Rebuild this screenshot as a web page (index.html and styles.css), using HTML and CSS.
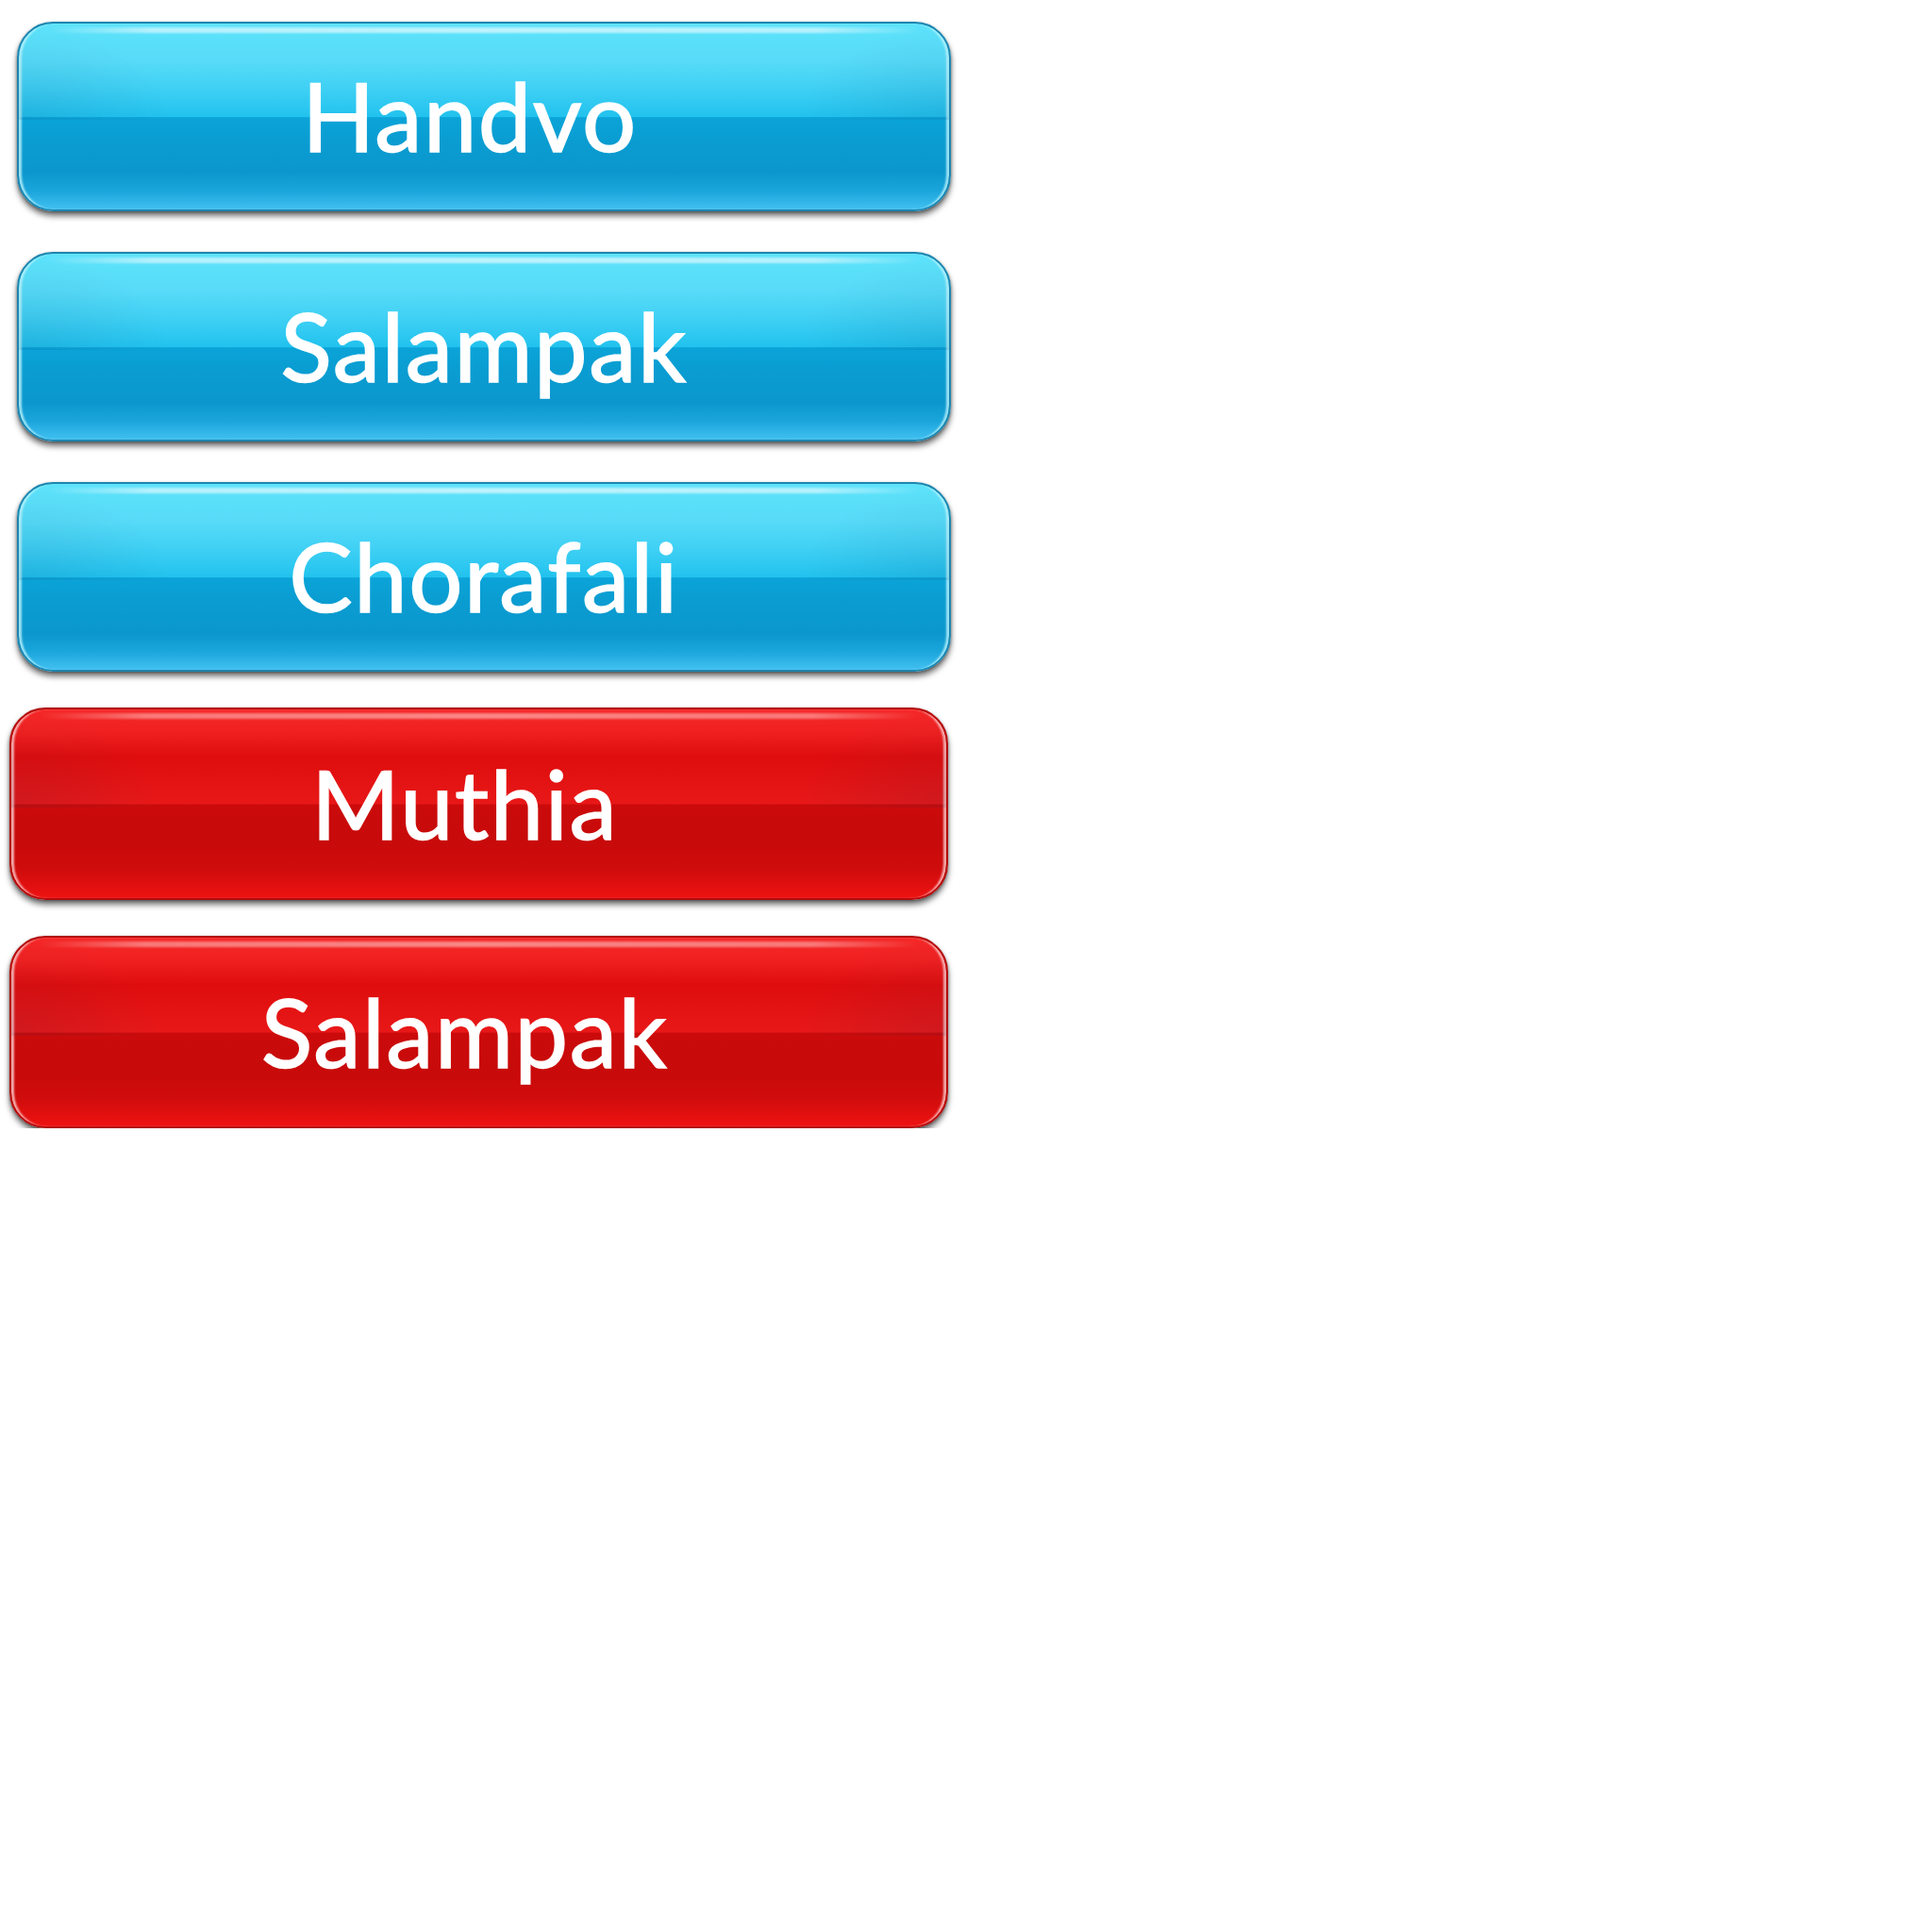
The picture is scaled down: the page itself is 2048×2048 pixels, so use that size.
FILE: index.html
```html
<!DOCTYPE html>
<html>
<head>
<meta charset="utf-8">
<title>Buttons</title>
<link rel="stylesheet" href="styles.css">
</head>
<body>
<div class="stack">
  <div class="btn btn-blue"><span class="label label-shift">Handvo</span></div>
  <div class="btn btn-blue"><span class="label">Salampak</span></div>
  <div class="btn btn-blue"><span class="label">Chorafali</span></div>
  <div class="btn btn-red"><span class="label label-shift">Muthia</span></div>
  <div class="btn btn-red"><span class="label label-shift">Salampak</span></div>
</div>
</body>
</html>
```

FILE: styles.css
```css
html, body {
  margin: 0;
  padding: 0;
  background: #ffffff;
}

.stack {
  display: flex;
  flex-direction: column;
  align-items: flex-start;
  gap: 40px;
  padding-top: 23px;
}

.btn {
  position: relative;
  box-sizing: border-box;
  height: 201px;
  border-radius: 38px;
  display: flex;
  align-items: center;
  justify-content: center;
  overflow: hidden;
}

.btn::before {
  content: "";
  position: absolute;
  left: 3%;
  right: 3%;
  top: 4px;
  height: 6px;
  border-radius: 3px;
  background: linear-gradient(90deg, rgba(255,255,255,0) 0%, rgba(255,255,255,0.55) 12%, rgba(255,255,255,0.6) 50%, rgba(255,255,255,0.55) 88%, rgba(255,255,255,0) 100%);
  filter: blur(1px);
}

.btn::after {
  content: "";
  position: absolute;
  left: 0;
  right: 0;
  top: 0;
  height: 52%;
  background:
    radial-gradient(ellipse 16% 100% at 0% 100%, rgba(0,40,90,0.10), rgba(0,40,90,0) 100%),
    radial-gradient(ellipse 16% 100% at 100% 100%, rgba(0,40,90,0.10), rgba(0,40,90,0) 100%);
  pointer-events: none;
}

.btn-blue {
  width: 990px;
  margin-left: 18px;
  border: 2px solid #1c86b0;
  background: linear-gradient(180deg,
    #5de3fb 0%,
    #57dbf8 20%,
    #3fd0f4 35%,
    #22c2ee 50%,
    #0ba4d8 50.6%,
    #0a9dd2 62%,
    #0b97cd 80%,
    #1aa5db 90%,
    #42c0f1 100%);
  box-shadow:
    0 5px 6px rgba(0,0,0,0.55),
    0 1px 3px rgba(0,0,0,0.35),
    inset 4px 0 2px -1px rgba(200,250,255,0.75),
    inset -4px 0 2px -1px rgba(200,250,255,0.75);
}

.btn-blue + .btn-blue {
  margin-top: 3px;
}

.btn-red {
  width: 995px;
  height: 204px;
  margin-left: 10px;
  margin-top: -2px;
  border: 2px solid #b40c0c;
  background: linear-gradient(180deg,
    #f52828 0%,
    #f02020 12%,
    #df0d0d 25%,
    #e51515 42%,
    #e81818 50%,
    #cb0b0b 50.6%,
    #c80a0a 70%,
    #d00c0c 85%,
    #ef1212 100%);
  box-shadow:
    0 5px 6px rgba(0,0,0,0.55),
    0 1px 3px rgba(0,0,0,0.35),
    inset 4px 0 2px -1px rgba(255,220,220,0.75),
    inset -4px 0 2px -1px rgba(255,220,220,0.75);
}

.btn-red::before {
  background: linear-gradient(90deg, rgba(255,200,200,0) 0%, rgba(255,190,190,0.55) 12%, rgba(255,200,200,0.6) 50%, rgba(255,190,190,0.55) 88%, rgba(255,200,200,0) 100%);
}

.label {
  position: relative;
  z-index: 1;
  font-family: "Lato", "DejaVu Sans", sans-serif;
  font-weight: 400;
  font-size: 101px;
  line-height: 1;
  letter-spacing: 1.5px;
  color: #ffffff;
  -webkit-text-stroke: 1.5px #ffffff;
  margin-top: -2px;
}

.label-shift {
  margin-right: 30px;
}
```
